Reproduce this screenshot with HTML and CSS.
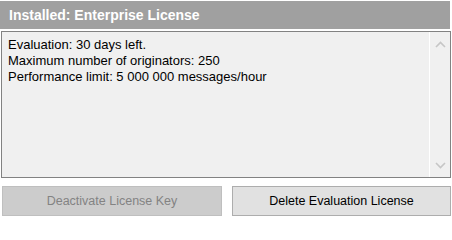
FILE: index.html
```html
<!DOCTYPE html>
<html>
<head>
<meta charset="utf-8">
<link rel="stylesheet" href="styles.css">
</head>
<body>
<div class="panel">
  <div class="header">Installed: Enterprise License</div>
  <div class="textbox">
    <div class="content">
      <div>Evaluation: 30 days left.</div>
      <div>Maximum number of originators: 250</div>
      <div>Performance limit: 5 000 000 messages/hour</div>
    </div>
    <div class="scrollbar">
      <svg class="arrow" width="11" height="7" viewBox="0 0 11 7"><path d="M1 6 L5.5 1.5 L10 6" fill="none" stroke="#c6c6c6" stroke-width="1.6"/></svg>
      <svg class="arrow" width="11" height="7" viewBox="0 0 11 7"><path d="M1 1 L5.5 5.5 L10 1" fill="none" stroke="#c6c6c6" stroke-width="1.6"/></svg>
    </div>
  </div>
  <div class="buttons">
    <div class="btn disabled">Deactivate License Key</div>
    <div class="btn">Delete Evaluation License</div>
  </div>
</div>
</body>
</html>
```
FILE: styles.css
```css
html, body {
  margin: 0;
  padding: 0;
  background: #ffffff;
}
body {
  width: 452px;
  height: 218px;
  overflow: hidden;
  font-family: "Liberation Sans", Arial, sans-serif;
}
.panel {
  display: flex;
  flex-direction: column;
  padding-top: 1px;
}
.header {
  width: 450px;
  height: 28px;
  background: #a0a0a0;
  color: #ffffff;
  font-weight: bold;
  font-size: 14px;
  line-height: 28px;
  padding-left: 9px;
  box-sizing: border-box;
}
.textbox {
  margin-top: 2px;
  margin-left: 1px;
  width: 450px;
  height: 147px;
  box-sizing: border-box;
  border: 1px solid #828282;
  background: #f0f0f0;
  display: flex;
}
.content {
  flex: 1;
  padding: 5px 0 0 6px;
  font-size: 13px;
  line-height: 16px;
  color: #000000;
}
.scrollbar {
  width: 20px;
  border-left: 1px solid #ffffff;
  display: flex;
  flex-direction: column;
  justify-content: space-between;
  align-items: center;
  padding: 9px 0 8px 0;
}
.arrow {
  display: block;
}
.buttons {
  margin-top: 8px;
  display: flex;
  padding-left: 2px;
  gap: 10px;
}
.btn {
  height: 30px;
  box-sizing: border-box;
  display: flex;
  align-items: center;
  justify-content: center;
  font-size: 12.5px;
  background: #e1e1e1;
  border: 1px solid #adadad;
  color: #000000;
  width: 219px;
}
.btn.disabled {
  width: 220px;
  background: #cccccc;
  border-color: #bfbfbf;
  color: #838383;
}
```
